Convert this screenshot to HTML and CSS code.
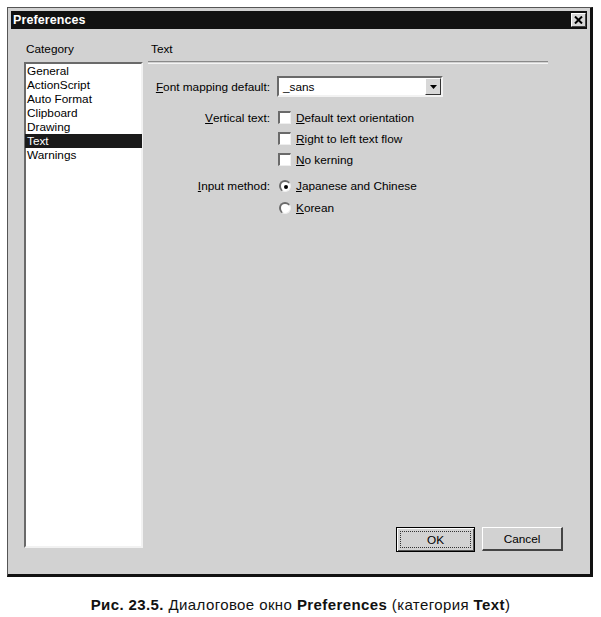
FILE: index.html
```html
<!DOCTYPE html>
<html>
<head>
<meta charset="utf-8">
<link rel="stylesheet" href="styles.css">
</head>
<body>
<div class="dialog">
  <div class="titlebar">
    <span class="title">Preferences</span>
    <span class="close">
      <svg width="9" height="8" viewBox="0 0 9 8"><path d="M1 0.5 L8 7.5 M8 0.5 L1 7.5" stroke="#000" stroke-width="2"/></svg>
    </span>
  </div>
  <div class="content">
    <div class="col-left">
      <div class="head">Category</div>
      <ul class="list">
        <li>General</li>
        <li>ActionScript</li>
        <li>Auto Format</li>
        <li>Clipboard</li>
        <li>Drawing</li>
        <li class="sel">Text</li>
        <li>Warnings</li>
      </ul>
    </div>
    <div class="col-right">
      <div class="head head-right">Text</div>
      <div class="sep"></div>
      <div class="form">
        <div class="lbl r-select"><u>F</u>ont mapping default:</div>
        <div class="ctl r-select">
          <div class="select">
            <span class="sel-text">_sans</span>
            <span class="sel-btn"><svg width="7" height="4" viewBox="0 0 7 4"><path d="M0 0 H7 L3.5 4 Z" fill="#000"/></svg></span>
          </div>
        </div>

        <div class="lbl r-chk r-first"><u>V</u>ertical text:</div>
        <div class="ctl r-chk r-first"><span class="box"></span><span><u>D</u>efault text orientation</span></div>

        <div class="lbl r-chk"></div>
        <div class="ctl r-chk"><span class="box"></span><span><u>R</u>ight to left text flow</span></div>

        <div class="lbl r-chk"></div>
        <div class="ctl r-chk"><span class="box"></span><span><u>N</u>o kerning</span></div>

        <div class="lbl r-rad r-gap"><u>I</u>nput method:</div>
        <div class="ctl r-rad r-gap"><span class="radio on"></span><span><u>J</u>apanese and Chinese</span></div>

        <div class="lbl r-rad"></div>
        <div class="ctl r-rad"><span class="radio"></span><span><u>K</u>orean</span></div>
      </div>
      <div class="buttons">
        <button class="btn btn-ok"><span class="focus">OK</span></button>
        <button class="btn btn-cancel">Cancel</button>
      </div>
    </div>
  </div>
</div>
<p class="caption"><b>Рис. 23.5.</b> Диалоговое окно <b>Preferences</b> (категория <b>Text</b>)</p>
</body>
</html>
```

FILE: styles.css
```css
html, body {
  margin: 0;
  padding: 0;
  background: #fff;
}
body {
  font-family: "Liberation Sans", Arial, sans-serif;
  font-size: 11.8px;
  color: #000;
}
.dialog {
  margin: 7px 0 0 7px;
  width: 586px;
  height: 570px;
  box-sizing: border-box;
  background: #d2d2d2;
  border-top: 1px solid #555;
  border-left: 1px solid #555;
  border-right: 3px solid #111;
  border-bottom: 3px solid #111;
  padding: 3px;
  display: flex;
  flex-direction: column;
}
.titlebar {
  height: 18px;
  background: #111;
  display: flex;
  align-items: center;
  justify-content: space-between;
  padding: 0 1px 0 2px;
}
.title {
  color: #fff;
  font-weight: bold;
  font-size: 12.5px;
  letter-spacing: 0.1px;
}
.close {
  width: 15px;
  height: 14px;
  box-sizing: border-box;
  background: #d8d8d8;
  border-top: 1px solid #fff;
  border-left: 1px solid #fff;
  border-right: 1px solid #444;
  border-bottom: 1px solid #444;
  display: flex;
  align-items: center;
  justify-content: center;
}
.content {
  flex: 1;
  display: flex;
  padding: 13px 24px 0 13px;
  gap: 5px;
}
.col-left {
  width: 119px;
  display: flex;
  flex-direction: column;
}
.head {
  height: 14px;
  line-height: 14px;
  margin-bottom: 6px;
  padding-left: 2px;
}
.head-right {
  padding-left: 3px;
  margin-bottom: 5px;
}
.list {
  list-style: none;
  margin: 0;
  padding: 0;
  height: 486px;
  box-sizing: border-box;
  background: #fff;
  border-top: 2px solid #6a6a6a;
  border-left: 2px solid #6a6a6a;
  border-right: 2px solid #f2f2f2;
  border-bottom: 2px solid #f2f2f2;
}
.list li {
  height: 14px;
  line-height: 14px;
  padding-left: 1px;
}
.list li.sel {
  background: #1a1a1a;
  color: #fff;
  margin: 0 -1px 0 -1px;
  padding-left: 2px;
}
.col-right {
  flex: 1;
  display: flex;
  flex-direction: column;
  height: 510px;
}
.sep {
  width: 400px;
  height: 1px;
  border-top: 1px solid #8a8a8a;
  border-bottom: 1px solid #f4f4f4;
}
.form {
  display: grid;
  grid-template-columns: 122px 1fr;
  column-gap: 7px;
  margin-top: 12px;
}
.lbl {
  text-align: right;
  display: flex;
  align-items: center;
  justify-content: flex-end;
}
.ctl {
  display: flex;
  align-items: center;
}
.r-select { height: 21px; }
.r-chk { height: 21px; }
.r-rad { height: 22px; }
.r-first { margin-top: 10px; }
.r-gap { margin-top: 5px; }
.select {
  width: 166px;
  height: 21px;
  box-sizing: border-box;
  background: #fff;
  border-top: 2px solid #6a6a6a;
  border-left: 2px solid #6a6a6a;
  border-right: 2px solid #f2f2f2;
  border-bottom: 2px solid #f2f2f2;
  display: flex;
  align-items: center;
  justify-content: space-between;
}
.sel-text {
  padding-left: 4px;
}
.sel-btn {
  width: 16px;
  height: 17px;
  box-sizing: border-box;
  background: #d8d8d8;
  border-top: 1px solid #fff;
  border-left: 1px solid #fff;
  border-right: 1px solid #333;
  border-bottom: 1px solid #333;
  display: flex;
  align-items: center;
  justify-content: center;
}
.box {
  width: 13px;
  height: 13px;
  box-sizing: border-box;
  background: #fff;
  border-top: 2px solid #6a6a6a;
  border-left: 2px solid #6a6a6a;
  border-right: 1px solid #eee;
  border-bottom: 1px solid #eee;
  margin-left: 1px;
  margin-right: 5px;
}
.radio {
  width: 12px;
  height: 12px;
  box-sizing: border-box;
  border-radius: 50%;
  background: #fff;
  border-top: 2px solid #6a6a6a;
  border-left: 2px solid #6a6a6a;
  border-right: 1px solid #eee;
  border-bottom: 1px solid #eee;
  margin-left: 2px;
  margin-right: 5px;
  display: flex;
  align-items: center;
  justify-content: center;
}
.radio.on::after {
  content: "";
  width: 4px;
  height: 4px;
  border-radius: 50%;
  background: #000;
}
.buttons {
  margin-top: auto;
  display: flex;
  justify-content: flex-end;
  gap: 7px;
}
.btn {
  font-family: "Liberation Sans", Arial, sans-serif;
  font-size: 11.8px;
  height: 24px;
  box-sizing: border-box;
  background: #d2d2d2;
  color: #000;
  padding: 0;
  margin: 0;
  border-top: 1px solid #fff;
  border-left: 1px solid #fff;
  border-right: 2px solid #444;
  border-bottom: 2px solid #444;
  display: flex;
  align-items: center;
  justify-content: center;
}
.btn-ok {
  width: 79px;
  height: 25px;
  border: 1px solid #000;
  box-shadow: inset 1px 1px 0 #fff, inset -1px -1px 0 #555;
  padding: 3px;
}
.focus {
  flex: 1;
  align-self: stretch;
  border: 1px dotted #333;
  display: flex;
  align-items: center;
  justify-content: center;
}
.btn-cancel {
  width: 81px;
  margin-bottom: 0;
}
.caption {
  margin: 19px 0 0 0;
  text-align: center;
  font-family: "Liberation Sans", Arial, sans-serif;
  font-size: 15px;
  letter-spacing: 0.4px;
  line-height: 18px;
  color: #111;
}
.caption b {
  font-weight: bold;
}
```
